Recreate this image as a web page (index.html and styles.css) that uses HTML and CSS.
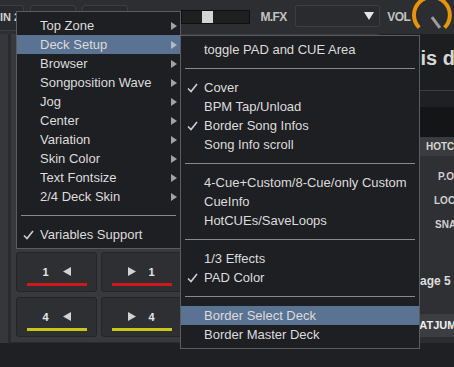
FILE: index.html
```html
<!DOCTYPE html>
<html>
<head>
<title>Skin Options Menu</title>
<link rel="stylesheet" href="styles.css">
</head>
<body>
<div class="app">
	<!-- top bar -->
	<div class="topbar">
		<div class="tbtn first">IN 2</div>
		<div class="tbtn"></div>
		<div class="tbtn"></div>
		<div class="xfader"><span class="xknob"></span></div>
		<span class="tlabel mfx">M.FX</span>
		<div class="select">
			<svg width="10" height="8" viewBox="0 0 10 8"><polygon points="0,0 10,0 5,8" fill="#e6e6e6"/></svg>
		</div>
		<span class="tlabel vol">VOL</span>
		<svg class="knob" width="44" height="36" viewBox="0 0 44 36">
			<circle cx="22" cy="15" r="15" fill="#2c2d30"/>
			<path d="M9.3 27.7 A18 18 0 1 1 34.7 27.7" fill="none" stroke="#e8940c" stroke-width="4"/>
			<line x1="22" y1="17" x2="30" y2="28" stroke="#9c9c9c" stroke-width="3"/>
		</svg>
	</div>

	<div class="main">
		<div class="strip"></div>
		<div class="deck">
			<div class="deck-top"></div>
			<div class="pads">
				<div class="pad">
					<div class="pad-label"><b>1</b><svg width="8" height="9" viewBox="0 0 8 9"><polygon points="8,0 8,9 0,4.5" fill="#d2d2d2"/></svg></div>
					<div class="pad-line red"></div>
				</div>
				<div class="pad">
					<div class="pad-label right"><svg width="8" height="9" viewBox="0 0 8 9"><polygon points="0,0 0,9 8,4.5" fill="#d2d2d2"/></svg><b>1</b></div>
					<div class="pad-line red"></div>
				</div>
				<div class="pad">
					<div class="pad-label"><b>4</b><svg width="8" height="9" viewBox="0 0 8 9"><polygon points="8,0 8,9 0,4.5" fill="#d2d2d2"/></svg></div>
					<div class="pad-line yellow"></div>
				</div>
				<div class="pad">
					<div class="pad-label right"><svg width="8" height="9" viewBox="0 0 8 9"><polygon points="0,0 0,9 8,4.5" fill="#d2d2d2"/></svg><b>4</b></div>
					<div class="pad-line yellow"></div>
				</div>
			</div>
		</div>
		<div class="side">
			<div class="side-title">This deck</div>
			<div class="side-info"></div>
			<div class="side-dark"></div>
			<div class="side-head">HOTCUES</div>
			<div class="side-panel">
				<div class="side-opt po">P.OFF</div>
				<div class="side-opt loc">LOCK</div>
				<div class="side-opt sna">SNAP</div>
				<div class="side-page">Page 5</div>
			</div>
			<div class="side-jump">BEATJUMP</div>
			<div class="side-foot"></div>
		</div>
	</div>
	<div class="footer"></div>

	<!-- context menu -->
	<div class="menu">
		<div class="item"><span class="chk"></span>Top Zone<svg class="arr" width="6" height="8"><polygon points="0,0 6,4 0,8" fill="#a3a3a3"/></svg></div>
		<div class="item on"><span class="chk"></span>Deck Setup<svg class="arr" width="6" height="8"><polygon points="0,0 6,4 0,8" fill="#b4b8c0"/></svg></div>
		<div class="item"><span class="chk"></span>Browser<svg class="arr" width="6" height="8"><polygon points="0,0 6,4 0,8" fill="#a3a3a3"/></svg></div>
		<div class="item"><span class="chk"></span>Songposition Wave<svg class="arr" width="6" height="8"><polygon points="0,0 6,4 0,8" fill="#a3a3a3"/></svg></div>
		<div class="item"><span class="chk"></span>Jog<svg class="arr" width="6" height="8"><polygon points="0,0 6,4 0,8" fill="#a3a3a3"/></svg></div>
		<div class="item"><span class="chk"></span>Center<svg class="arr" width="6" height="8"><polygon points="0,0 6,4 0,8" fill="#a3a3a3"/></svg></div>
		<div class="item"><span class="chk"></span>Variation<svg class="arr" width="6" height="8"><polygon points="0,0 6,4 0,8" fill="#a3a3a3"/></svg></div>
		<div class="item"><span class="chk"></span>Skin Color<svg class="arr" width="6" height="8"><polygon points="0,0 6,4 0,8" fill="#a3a3a3"/></svg></div>
		<div class="item"><span class="chk"></span>Text Fontsize<svg class="arr" width="6" height="8"><polygon points="0,0 6,4 0,8" fill="#a3a3a3"/></svg></div>
		<div class="item"><span class="chk"></span>2/4 Deck Skin<svg class="arr" width="6" height="8"><polygon points="0,0 6,4 0,8" fill="#a3a3a3"/></svg></div>
		<div class="sep"><span></span></div>
		<div class="item"><span class="chk"><svg width="11" height="10" viewBox="0 0 11 10"><path d="M1 5.5 L4 8.5 L10 1" fill="none" stroke="#cfcfcf" stroke-width="1.6"/></svg></span>Variables Support</div>
	</div>

	<!-- Deck Setup submenu -->
	<div class="menu sub">
		<div class="item"><span class="chk"></span>toggle PAD and CUE Area</div>
		<div class="sep"><span></span></div>
		<div class="item"><span class="chk"><svg width="11" height="10" viewBox="0 0 11 10"><path d="M1 5.5 L4 8.5 L10 1" fill="none" stroke="#cfcfcf" stroke-width="1.6"/></svg></span>Cover</div>
		<div class="item"><span class="chk"></span>BPM Tap/Unload</div>
		<div class="item"><span class="chk"><svg width="11" height="10" viewBox="0 0 11 10"><path d="M1 5.5 L4 8.5 L10 1" fill="none" stroke="#cfcfcf" stroke-width="1.6"/></svg></span>Border Song Infos</div>
		<div class="item"><span class="chk"></span>Song Info scroll</div>
		<div class="sep"><span></span></div>
		<div class="item"><span class="chk"></span>4-Cue+Custom/8-Cue/only Custom</div>
		<div class="item"><span class="chk"></span>CueInfo</div>
		<div class="item"><span class="chk"></span>HotCUEs/SaveLoops</div>
		<div class="sep"><span></span></div>
		<div class="item"><span class="chk"></span>1/3 Effects</div>
		<div class="item"><span class="chk"><svg width="11" height="10" viewBox="0 0 11 10"><path d="M1 5.5 L4 8.5 L10 1" fill="none" stroke="#cfcfcf" stroke-width="1.6"/></svg></span>PAD Color</div>
		<div class="sep"><span></span></div>
		<div class="item on"><span class="chk"></span>Border Select Deck</div>
		<div class="item"><span class="chk"></span>Border Master Deck</div>
	</div>
</div>
</body>
</html>
```
FILE: styles.css
```css
body {
	margin: 0;
	background: #1f2023;
	font-family: "Liberation Sans", Arial, sans-serif;
}
.app {
	position: relative;
	width: 454px;
	height: 367px;
	overflow: hidden;
	background: #1f2023;
}

/* top bar */
.topbar {
	display: flex;
	align-items: flex-start;
	height: 34px;
	background: #2d2e31;
}
.tbtn {
	box-sizing: border-box;
	width: 46px;
	height: 26px;
	margin: 5px 0 0 6px;
	background: #292a2d;
	border: 1px solid #3d3e41;
	border-radius: 3px;
}
.tbtn.first {
	width: 24px;
	margin-left: 0;
	border-left: none;
	border-radius: 0 3px 3px 0;
	padding-top: 5px;
	font-size: 11px;
	font-weight: bold;
	line-height: 13px;
	color: #d0d0d0;
	white-space: nowrap;
}
.xfader {
	box-sizing: border-box;
	display: flex;
	align-items: center;
	width: 70px;
	height: 14px;
	margin: 10px 0 0 53px;
	padding-left: 20px;
	background: #1f1f20;
	border: 1px solid #0f0f10;
}
.xknob {
	width: 11px;
	height: 12px;
	background: #d4d4d4;
}
.tlabel {
	align-self: center;
	font-size: 12px;
	font-weight: bold;
	letter-spacing: -0.6px;
	color: #c2c2c2;
}
.mfx { margin-left: 10px; }
.vol { margin-left: 7px; }
.select {
	box-sizing: border-box;
	display: flex;
	align-items: center;
	justify-content: flex-end;
	width: 86px;
	height: 22px;
	margin: 5px 0 0 8px;
	padding-right: 5px;
	background: #2a2b2e;
	border: 1px solid #3c3d40;
	border-radius: 2px;
}
.knob {
	position: relative;
	z-index: 1;
	margin-left: auto;
}

/* main area */
.main {
	display: flex;
	height: 309px;
	background: #2a2b2e;
}
.strip {
	width: 8px;
	background: #36373a;
}
.deck {
	display: flex;
	flex-direction: column;
	width: 367px;
	margin: 0 0 1px 3px;
	background: #39393c;
}
.deck-top { flex: 1; }
.pads {
	display: grid;
	grid-template-columns: 81px 81px;
	grid-auto-rows: 40px;
	gap: 5px 4px;
	padding: 0 5px 5px 5px;
}
.pad {
	box-sizing: border-box;
	display: flex;
	flex-direction: column;
	align-items: center;
	padding-top: 13px;
	background: #2e2f32;
	border: 1px solid #242528;
	border-radius: 3px;
}
.pad-label {
	display: flex;
	align-items: center;
	gap: 14px;
	height: 11px;
	font-size: 11px;
	font-weight: bold;
	color: #e2e6ec;
}
.pad-label.right { gap: 12px; }
.pad-line {
	width: 60px;
	height: 3px;
	margin-top: 6px;
}
.red { background: #cc1a1a; }
.yellow { background: #c9c61c; }

/* right deck column */
.side {
	display: flex;
	flex-direction: column;
	width: 74px;
	margin-left: 2px;
	white-space: nowrap;
	overflow: hidden;
	font-weight: bold;
}
.side-title {
	height: 42px;
	padding: 14px 0 0 16px;
	font-size: 20px;
	line-height: 20px;
	color: #d6d6d6;
	background: #1d1e20;
	border-bottom: 1px solid #3c3d40;
}
.side-info {
	height: 16px;
	background: #1f2023;
}
.side-dark {
	height: 30px;
	background: #141517;
}
.side-head {
	height: 19px;
	padding-left: 46px;
	font-size: 10px;
	line-height: 19px;
	color: #d4d4d4;
	background: #3a3b3e;
}
.side-panel {
	height: 149px;
	padding-top: 9px;
	font-size: 10px;
	color: #d0d0d0;
	background: #2f3033;
}
.side-opt { line-height: 24px; }
.po { padding-left: 58px; }
.loc { padding-left: 54px; }
.sna { padding-left: 55px; }
.side-page {
	margin-top: 32px;
	padding-left: 32px;
	font-size: 12px;
	line-height: 24px;
	color: #dedede;
}
.side-jump {
	height: 23px;
	padding-left: 24px;
	font-size: 11px;
	line-height: 23px;
	color: #f0f0f0;
	background: #3c3d40;
}
.side-foot {
	height: 6px;
	background: #2b2c2f;
}
.footer {
	height: 24px;
	background: #1f2023;
}

/* menus */
.menu {
	position: absolute;
	left: 16px;
	top: 11px;
	box-sizing: border-box;
	width: 165px;
	padding: 4px 0;
	background: #1e1f22;
	border: 1px solid #5b5c5f;
	font-size: 13px;
	color: #dcdcdc;
}
.menu.sub {
	left: 180px;
	top: 35px;
	width: 240px;
}
.item {
	display: flex;
	align-items: center;
	height: 19px;
	white-space: nowrap;
}
.item.on { background: #5a7393; }
.chk {
	display: flex;
	align-items: center;
	flex: none;
	width: 17px;
	height: 19px;
	padding-left: 6px;
}
.arr {
	margin: 0 3px 0 auto;
}
.sep {
	display: flex;
	align-items: center;
	height: 19px;
	padding: 0 4px;
}
.sep span {
	flex: 1;
	height: 1px;
	background: #8a8a8a;
}
```
